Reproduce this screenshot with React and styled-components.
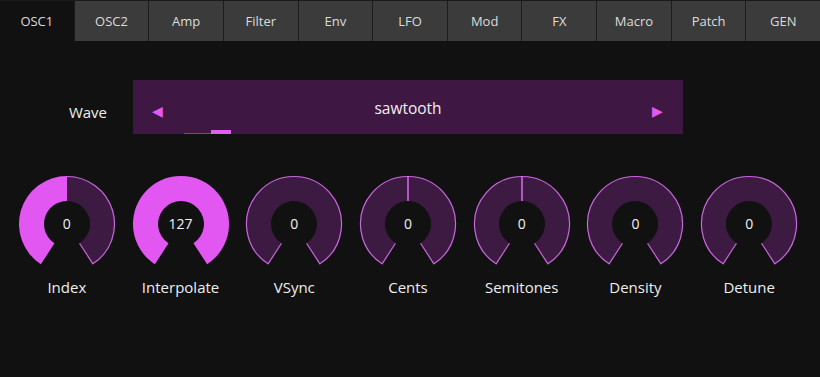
import React, { useState } from 'react';
import styled, { createGlobalStyle } from 'styled-components';

const GlobalStyle = createGlobalStyle`
  html, body {
    margin: 0;
    padding: 0;
    background: #111111;
  }
  body {
    font-family: "Open Sans", "Noto Sans", sans-serif;
  }
`;

const Page = styled.div`
  width: 820px;
  height: 377px;
  background: #111111;
  display: flex;
  flex-direction: column;
  overflow: hidden;
`;

const TabBar = styled.div`
  display: flex;
  gap: 1px;
  height: 40px;
  background: #1c1c1c;
  border-top: 1px solid #1a1a1a;
`;

const Tab = styled.button`
  flex: 1;
  border: none;
  margin: 0;
  padding: 0;
  background: ${(p) => (p.$active ? '#111111' : '#3b3b3b')};
  color: #dcdcdc;
  font-family: inherit;
  font-size: 13px;
  cursor: pointer;
`;

const WaveRow = styled.div`
  display: flex;
  align-items: center;
  margin-top: 39px;
  height: 54px;
`;

const WaveLabel = styled.div`
  width: 107px;
  padding-right: 26px;
  margin-top: 10px;
  text-align: right;
  color: #eeeeee;
  font-size: 15px;
`;

const Selector = styled.div`
  position: relative;
  width: 550px;
  height: 54px;
  background: #3e1743;
  display: flex;
  align-items: center;
  justify-content: space-between;
  padding: 0 19px 0 19px;
  box-sizing: border-box;
`;

const Arrow = styled.span`
  color: #e458f2;
  font-size: 14px;
  width: 12px;
  margin-top: 6px;
`;

const SelectorText = styled.span`
  color: #f0f0f0;
  font-size: 15.5px;
  margin-top: 1px;
`;

const Track = styled.div`
  position: absolute;
  left: 51px;
  bottom: 0;
  width: 47px;
  height: 4px;
  display: flex;
  align-items: flex-end;
`;

const TrackLine = styled.div`
  width: 27px;
  height: 1px;
  background: #8c3a9c;
`;

const TrackThumb = styled.div`
  width: 20px;
  height: 4px;
  background: #e05ef0;
`;

const KnobRow = styled.div`
  display: grid;
  grid-template-columns: repeat(7, 1fr);
  width: 796px;
  margin-left: 10px;
  margin-top: 40px;
`;

const KnobCell = styled.div`
  display: flex;
  flex-direction: column;
  align-items: center;
`;

const Dial = styled.div`
  position: relative;
  width: 100px;
  height: 100px;
`;

const DialValue = styled.span`
  position: absolute;
  left: 0;
  right: 0;
  top: 40px;
  text-align: center;
  color: #f2f2f2;
  font-size: 14px;
`;

const KnobLabel = styled.div`
  margin-top: 3px;
  color: #eeeeee;
  font-size: 15px;
`;

const CX = 50;
const CY = 50;
const R_OUT = 48;
const R_IN = 23;
const END = 147;

const pt = (r, deg) => {
  const a = (deg * Math.PI) / 180;
  return [CX + r * Math.sin(a), CY - r * Math.cos(a)];
};

const sector = (a0, a1) => {
  const large = a1 - a0 > 180 ? 1 : 0;
  const [x0, y0] = pt(R_OUT, a0);
  const [x1, y1] = pt(R_OUT, a1);
  const [x2, y2] = pt(R_IN, a1);
  const [x3, y3] = pt(R_IN, a0);
  return `M${x0} ${y0} A${R_OUT} ${R_OUT} 0 ${large} 1 ${x1} ${y1} L${x2} ${y2} A${R_IN} ${R_IN} 0 ${large} 0 ${x3} ${y3} Z`;
};

const outline = (a0, withLeftCut) => {
  const large = END - a0 > 180 ? 1 : 0;
  const [ix0, iy0] = pt(R_IN, a0);
  const [x0, y0] = pt(R_OUT - 0.5, a0);
  const [x1, y1] = pt(R_OUT - 0.5, END);
  const [ix1, iy1] = pt(R_IN, END);
  const start = withLeftCut ? `M${ix0} ${iy0} L${x0} ${y0}` : `M${x0} ${y0}`;
  return `${start} A${R_OUT - 0.5} ${R_OUT - 0.5} 0 ${large} 1 ${x1} ${y1} L${ix1} ${iy1}`;
};

function Knob({ label, value, fillTo, marker }) {
  const [mx0, my0] = pt(R_IN, marker ?? 0);
  const [mx1, my1] = pt(R_OUT, marker ?? 0);
  return (
    <KnobCell>
      <Dial>
        <svg width="100" height="100" viewBox="0 0 100 100">
          <path d={sector(-END, END)} fill="#3c1a42" />
          {fillTo != null && <path d={sector(-END, fillTo)} fill="#e257f2" />}
          {(fillTo == null || fillTo < END) && (
            <path
              d={outline(fillTo ?? -END, fillTo == null)}
              fill="none"
              stroke="#c866dc"
              strokeWidth="1.2"
            />
          )}
          {marker != null && (
            <line x1={mx0} y1={my0} x2={mx1} y2={my1} stroke="#d466e6" strokeWidth="1.6" />
          )}
        </svg>
        <DialValue>{value}</DialValue>
      </Dial>
      <KnobLabel>{label}</KnobLabel>
    </KnobCell>
  );
}

const tabs = ['OSC1', 'OSC2', 'Amp', 'Filter', 'Env', 'LFO', 'Mod', 'FX', 'Macro', 'Patch', 'GEN'];

const knobs = [
  { label: 'Index', value: 0, fillTo: 0 },
  { label: 'Interpolate', value: 127, fillTo: END },
  { label: 'VSync', value: 0 },
  { label: 'Cents', value: 0, marker: 0 },
  { label: 'Semitones', value: 0, marker: 0 },
  { label: 'Density', value: 0 },
  { label: 'Detune', value: 0 },
];

export default function App() {
  const [active, setActive] = useState('OSC1');
  return (
    <>
      <GlobalStyle />
      <Page>
        <TabBar>
          {tabs.map((t) => (
            <Tab key={t} $active={t === active} onClick={() => setActive(t)}>
              {t}
            </Tab>
          ))}
        </TabBar>
        <WaveRow>
          <WaveLabel>Wave</WaveLabel>
          <Selector>
            <Arrow>◀</Arrow>
            <SelectorText>sawtooth</SelectorText>
            <Arrow>▶</Arrow>
            <Track>
              <TrackLine />
              <TrackThumb />
            </Track>
          </Selector>
        </WaveRow>
        <KnobRow>
          {knobs.map((k) => (
            <Knob key={k.label} {...k} />
          ))}
        </KnobRow>
      </Page>
    </>
  );
}
